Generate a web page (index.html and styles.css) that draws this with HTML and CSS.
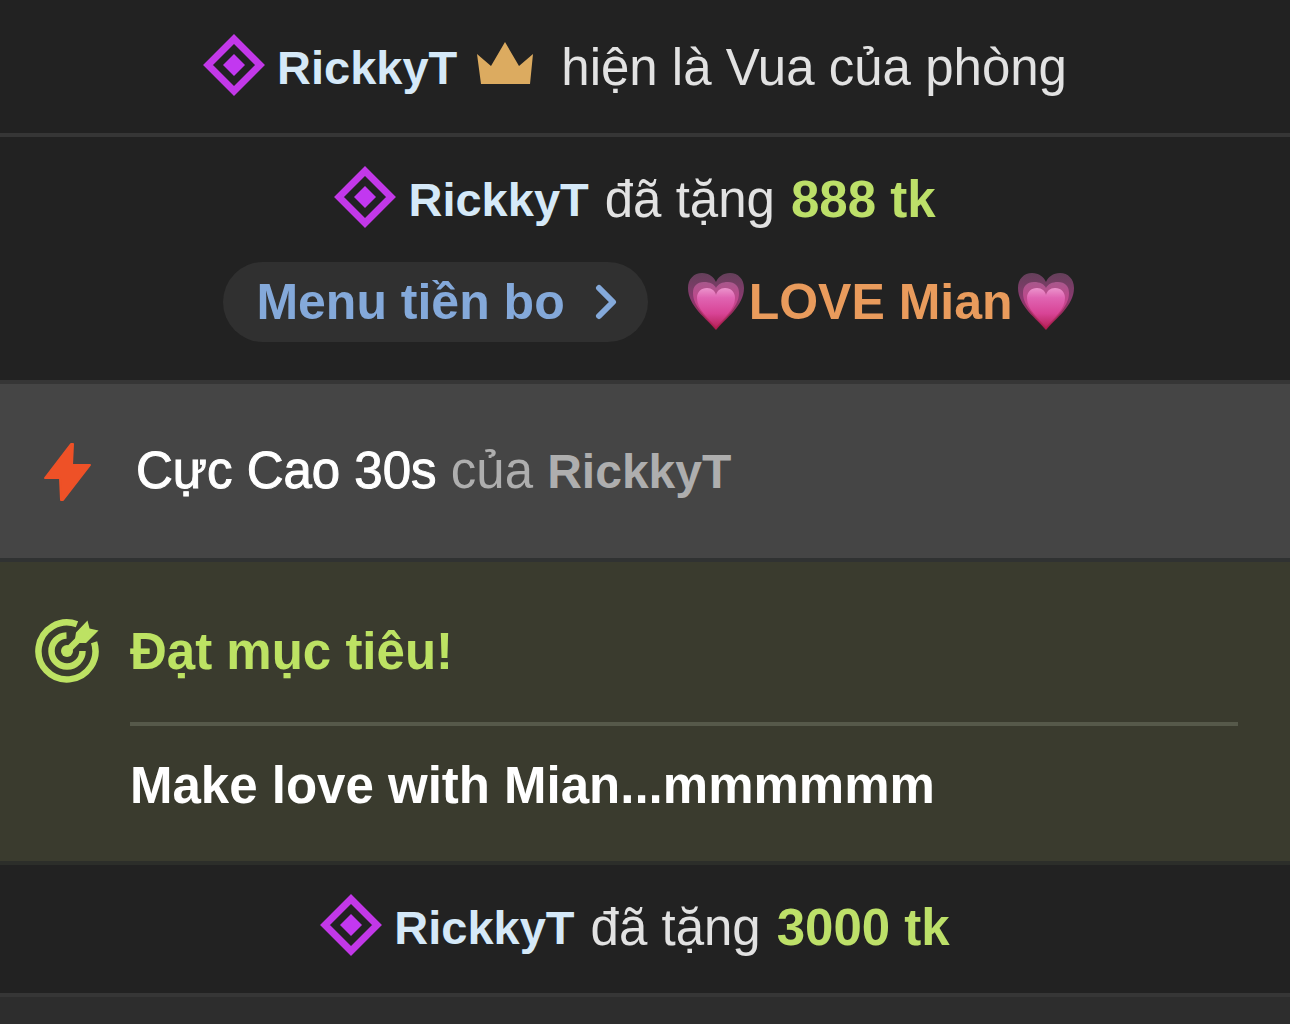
FILE: index.html
```
<!DOCTYPE html>
<html lang="vi">
<head>
    <meta charset="UTF-8">
    <meta name="viewport" content="width=device-width, initial-scale=1.0">
    <title>Chat</title>
    <link rel="stylesheet" href="styles.css">
</head>
<body>
    <!-- shared icons -->
    <svg class="sprite" aria-hidden="true">
        <linearGradient id="heartBack" x1="0" y1="0" x2="0" y2="1">
            <stop offset="0" stop-color="#64405a"/>
            <stop offset="0.45" stop-color="#8a3a70"/>
            <stop offset="1" stop-color="#a81c48"/>
        </linearGradient>
        <linearGradient id="heartMid" x1="0" y1="0" x2="0" y2="1">
            <stop offset="0" stop-color="#a8588c"/>
            <stop offset="0.5" stop-color="#c8428c"/>
            <stop offset="1" stop-color="#b01c50"/>
        </linearGradient>
        <linearGradient id="heartFront" x1="0" y1="0" x2="0" y2="1">
            <stop offset="0" stop-color="#eb94cc"/>
            <stop offset="0.25" stop-color="#e064b2"/>
            <stop offset="0.65" stop-color="#d84496"/>
            <stop offset="1" stop-color="#b8245c"/>
        </linearGradient>
        <symbol id="diamond" viewBox="0 0 62 62">
            <path d="M31 5 57 31 31 57 5 31Z" fill="none" stroke="#c238e8" stroke-width="7"/>
            <path d="M31 20 42 31 31 42 20 31Z" fill="#c238f0"/>
        </symbol>
        <symbol id="heart" viewBox="0 0 58 60">
            <path d="M29 58C20 47 1 34 1 16 1 7 7 1 15 1c7 0 12 4 14 9 2-5 7-9 14-9 8 0 14 6 14 15 0 18-19 31-28 42Z" fill="url(#heartBack)"/>
            <path d="M29 57C21 47 6 35 6 21c0-7 4-11 11-11 6 0 10 2 12 6 2-4 6-6 12-6 7 0 11 4 11 11 0 14-15 26-23 36Z" fill="url(#heartMid)"/>
            <path d="M29 55C21 46 10 37 10 26c0-6 4-10 10-10 5 0 8 3 9 7 1-4 4-7 9-7 6 0 10 4 10 10 0 11-11 20-19 29Z" fill="url(#heartFront)"/>
        </symbol>
    </svg>

    <main class="chat">
        <section class="row king-row">
            <p class="line">
                <svg class="diamond"><use href="#diamond"/></svg>
                <b class="name">RickkyT</b>
                <svg class="crown" viewBox="0 0 56 42"><path d="M0 12 14 24 28 0 42 24 56 12 53 42H4Z" fill="#dcab60"/></svg>
                <span>hiện là Vua của phòng</span>
            </p>
        </section>

        <section class="row tip-row">
            <p class="line">
                <svg class="diamond"><use href="#diamond"/></svg>
                <b class="name">RickkyT</b>
                <span>đã tặng</span>
                <b class="amount">888 tk</b>
            </p>
            <div class="tip-menu">
                <button type="button" class="menu-btn">
                    Menu tiền bo
                    <svg class="chevron" viewBox="0 0 22 36"><path d="M4 4 18 18 4 32" fill="none" stroke="currentColor" stroke-width="6" stroke-linecap="round" stroke-linejoin="round"/></svg>
                </button>
                <span class="tip-item">
                    <svg class="heart"><use href="#heart"/></svg>
                    <b>LOVE Mian</b>
                    <svg class="heart"><use href="#heart"/></svg>
                </span>
            </div>
        </section>

        <section class="row boost">
            <svg class="bolt" viewBox="0 0 48 60"><path d="M28 2h2l-1 21h18L20 58h-2l-1-22H2Z" fill="#ee5127" stroke="#ee5127" stroke-width="2" stroke-linejoin="round"/></svg>
            <p><span class="boost-name">Cực Cao 30s</span> <span class="boost-by">của <b class="boost-user">RickkyT</b></span></p>
        </section>

        <section class="row goal">
            <svg class="target" viewBox="0 0 64 64">
                <g fill="none" stroke="#bde263" stroke-width="6.5">
                    <path d="M59.1 23.3A28.5 28.5 0 1 1 42 5.3"/>
                    <path d="M47.5 32A15.5 15.5 0 1 1 31.5 16.5"/>
                    <path d="M32 32 46 18"/>
                </g>
                <circle cx="32" cy="32" r="6" fill="#bde263"/>
                <path d="M41 13.5 52.5 1.5 54.5 9.5 63.5 11.5 51 24H44L40 20Z" fill="#bde263"/>
            </svg>
            <div class="goal-body">
                <h2 class="goal-title">Đạt mục tiêu!</h2>
                <p class="goal-text">Make love with Mian...mmmmmm</p>
            </div>
        </section>

        <section class="row">
            <p class="line">
                <svg class="diamond"><use href="#diamond"/></svg>
                <b class="name">RickkyT</b>
                <span>đã tặng</span>
                <b class="amount">3000 tk</b>
            </p>
        </section>
    </main>
</body>
</html>
```
FILE: styles.css
```
* {
    box-sizing: border-box;
}

body {
    margin: 0;
    background-color: #2d2d2d;
    color: #e2e2e2;
    font-family: "Liberation Sans", Arial, Helvetica, sans-serif;
    font-size: 51px;
    line-height: 66px;
}

p,
h2 {
    margin: 0;
    font-size: inherit;
}

svg {
    flex: none;
}

.sprite {
    position: absolute;
    width: 0;
    height: 0;
}

.row {
    padding: 30px 24px 32px;
    background-color: #222222;
    border-bottom: 4px solid #363636;
}

.king-row {
    padding-top: 35px;
}

.line {
    display: flex;
    justify-content: center;
    align-items: center;
    gap: 16px;
    padding-right: 20px;
}

.diamond {
    width: 62px;
    height: 62px;
    margin: -1px -4px 5px 0;
}

.name {
    color: #d5e9f8;
    font-size: 47px;
}

.crown {
    width: 56px;
    height: 42px;
    margin: 0 12px 10px 4px;
}

.amount {
    color: #bde069;
}

.tip-row {
    padding-bottom: 38px;
}

.tip-menu {
    display: flex;
    justify-content: center;
    align-items: center;
    gap: 39px;
    margin-top: 29px;
    padding-left: 8px;
    font-size: 50px;
}

.menu-btn {
    display: flex;
    align-items: center;
    gap: 30px;
    height: 80px;
    padding: 0 31px 0 33px;
    border: none;
    border-radius: 40px;
    background-color: #303030;
    color: #84a9da;
    font: inherit;
    font-weight: bold;
    cursor: pointer;
}

.chevron {
    width: 22px;
    height: 36px;
}

.tip-item {
    display: flex;
    align-items: center;
    gap: 4px;
    color: #e99b5c;
}

.heart {
    width: 58px;
    height: 60px;
}

.boost {
    display: flex;
    align-items: center;
    gap: 45px;
    padding: 54px 43px 53px;
    background-color: #454545;
    border-color: #303232;
}

.bolt {
    width: 48px;
    height: 60px;
}

.boost-name {
    color: #ffffff;
    -webkit-text-stroke: 1px;
}

.boost-by {
    color: #aeaeae;
}

.boost-user {
    font-size: 48px;
}

.goal {
    display: flex;
    align-items: flex-start;
    gap: 31px;
    padding: 57px 52px 42px 35px;
    background-color: #3a3b2e;
    border-color: #2c2e2a;
}

.target {
    width: 64px;
    height: 64px;
}

.goal-body {
    flex: 1;
}

.goal-title {
    padding-bottom: 37px;
    border-bottom: 4px solid #56594a;
    color: #bde263;
}

.goal-text {
    padding-top: 27px;
    color: #ffffff;
    font-weight: bold;
}
```
